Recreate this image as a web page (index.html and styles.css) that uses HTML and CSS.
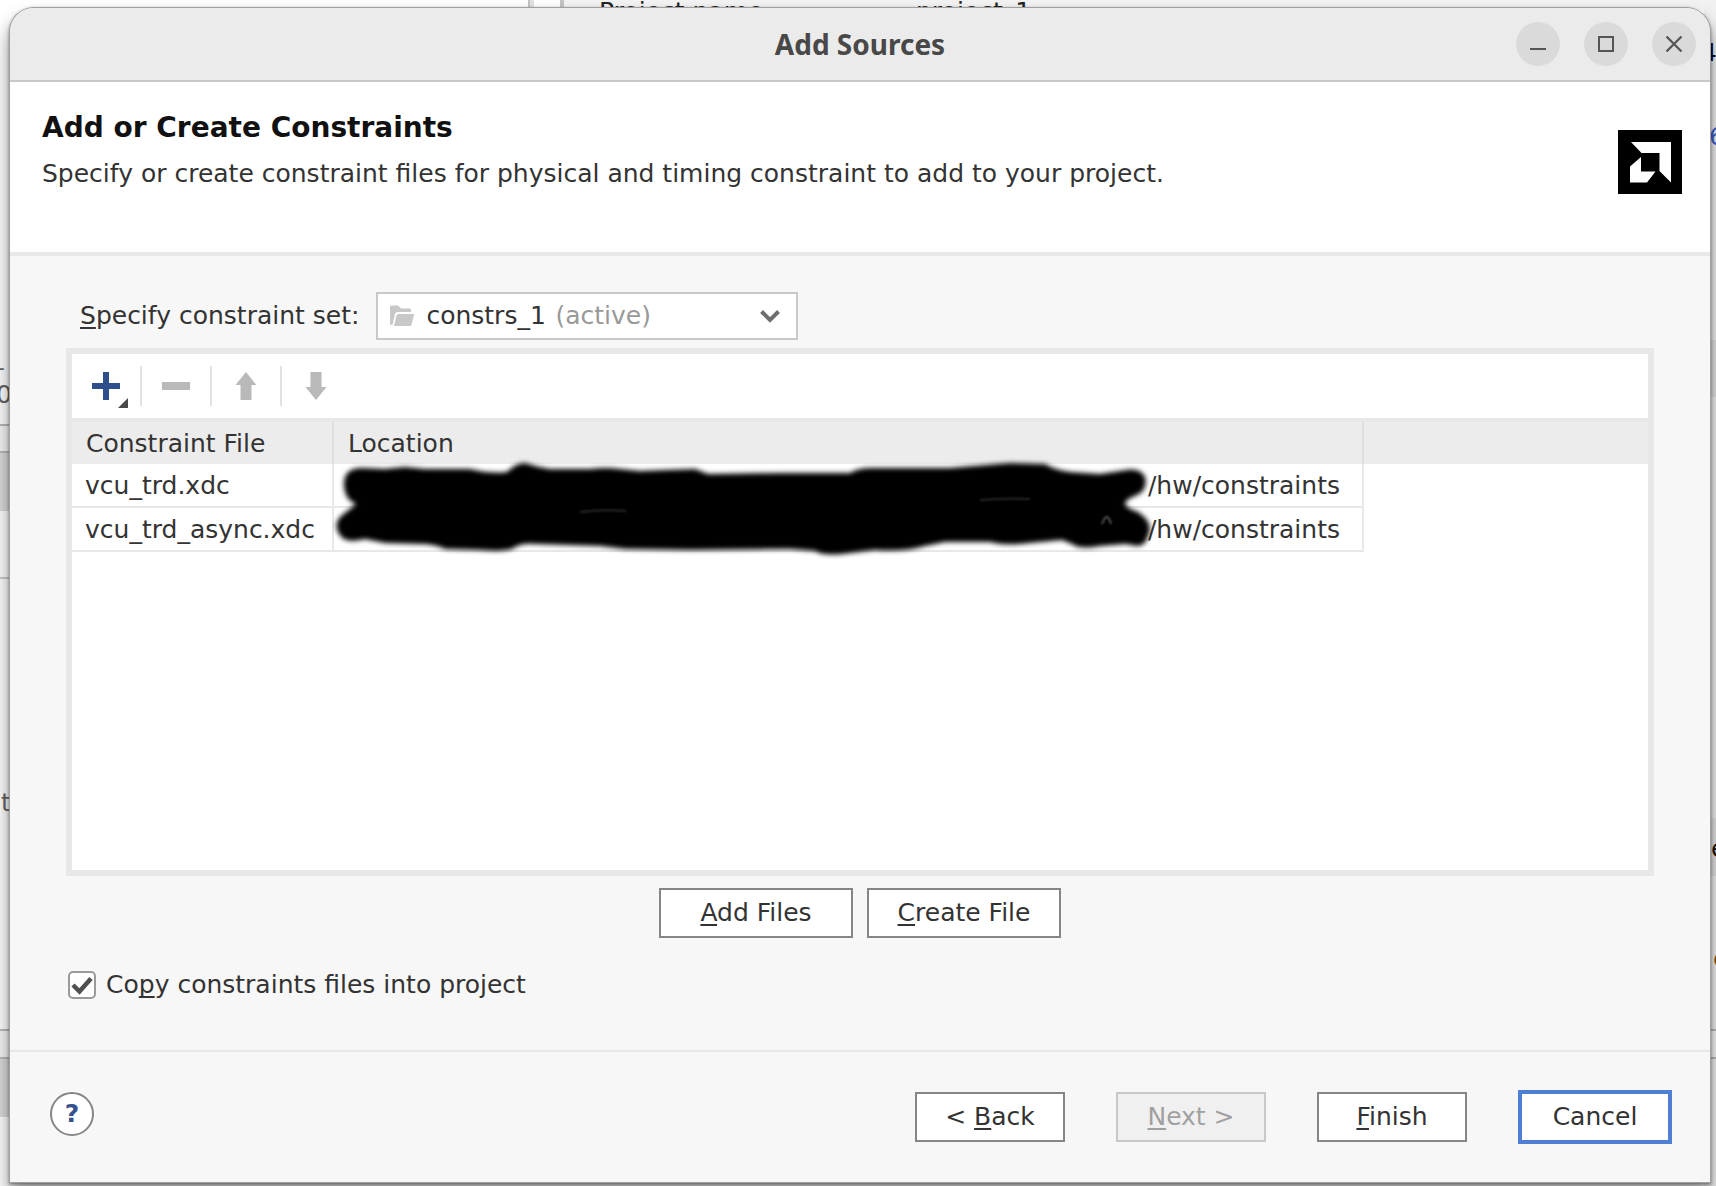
FILE: index.html
```html
<!DOCTYPE html>
<html lang="en">
<head>
<meta charset="utf-8">
<title>Add Sources</title>
<link rel="stylesheet" href="styles.css">
</head>
<body>
<div class="desktop" aria-hidden="true">
  <span class="pane-edge pane-edge-a"></span>
  <span class="pane-edge pane-edge-b"></span>
  <span class="peek peek-name">Project name:</span>
  <span class="peek peek-value">project_1</span>
  <div class="side side-left">
    <span class="band band-gap-1"></span>
    <span class="band band-head-1"></span>
    <span class="band band-rule"></span>
    <span class="band band-gap-2"></span>
    <span class="band band-head-2"></span>
    <span class="peek peek-rule">_</span>
    <span class="peek peek-zero">0</span>
    <span class="peek peek-t">t</span>
  </div>
  <div class="side side-right">
    <span class="band band-tint-1"></span>
    <span class="band band-tint-2"></span>
    <span class="band band-gap-2"></span>
    <span class="peek peek-four">4</span>
    <span class="peek peek-link">6</span>
    <span class="peek peek-e1">e</span>
    <span class="peek peek-e2">e</span>
  </div>
</div>

<main class="dialog" role="dialog" aria-labelledby="dialog-title">
  <header class="titlebar">
    <h1 class="title" id="dialog-title">Add Sources</h1>
    <div class="window-actions">
      <button class="window-button" type="button" aria-label="Minimize">
        <svg width="44" height="44" viewBox="0 0 44 44"><path d="M14 27h16" stroke="#555" stroke-width="2"/></svg>
      </button>
      <button class="window-button" type="button" aria-label="Maximize">
        <svg width="44" height="44" viewBox="0 0 44 44"><path d="M15 15h14v14H15z" fill="none" stroke="#555" stroke-width="2"/></svg>
      </button>
      <button class="window-button" type="button" aria-label="Close">
        <svg width="44" height="44" viewBox="0 0 44 44"><path d="M14.500 14.500l15 15m0-15l-15 15" stroke="#555" stroke-width="2.300"/></svg>
      </button>
    </div>
  </header>

  <section class="intro">
    <div class="intro-text">
      <h2 class="heading">Add or Create Constraints</h2>
      <p class="lead">Specify or create constraint files for physical and timing constraint to add to your project.</p>
    </div>
    <svg class="logo" width="64" height="64" viewBox="0 0 64 64" role="img" aria-label="AMD">
      <path d="M0 0h64v64H0z" fill="#000"/>
      <path d="M13 12H53v40.500L41.500 41V23H23.500z" fill="#fff"/>
      <path d="M23 27v14.500h14.500L29 52.500H12V36.500z" fill="#fff"/>
    </svg>
  </section>

  <form class="content">
    <div class="set-row">
      <label for="constraint-set"><u>S</u>pecify constraint set:</label>
      <div class="combo">
        <select class="combo-select" id="constraint-set"><option>constrs_1</option></select>
        <svg class="combo-folder" width="24" height="22" viewBox="0 0 24 22"><path d="M0 2q0-1.500 1.500-1.500H8L11 3.500h8.500q1.500 0 1.500 1.500v2H7.500Q5.500 7 5 9L2.500 20H1.500Q0 20 0 18.500z" fill="#c8c8c8"/><path d="M8.500 9H23.500q.6 0 .5 1L21.500 19.500q-.4 1.500-2 1.500H4L6.500 10.500Q7 9 8.500 9z" fill="#c8c8c8"/></svg>
        <span class="combo-state">(active)</span>
        <svg class="combo-arrow" width="20" height="14" viewBox="0 0 20 14"><path d="M1.500 2.500L10 11l8.500-8.500" fill="none" stroke="#6e6e6e" stroke-width="4"/></svg>
      </div>
    </div>

    <div class="panel">
      <div class="toolbar">
        <button class="tool" type="button" aria-label="Add">
          <svg width="40" height="40" viewBox="0 0 40 40"><path d="M6 20h28M20 6v28" stroke="#2f4f8a" stroke-width="6"/><path d="M42 32v10H32z" fill="#4a4a4a"/></svg>
        </button>
        <button class="tool" type="button" aria-label="Remove" disabled>
          <svg width="40" height="40" viewBox="0 0 40 40"><path d="M6 20h28" stroke="#b9b9b9" stroke-width="8"/></svg>
        </button>
        <button class="tool" type="button" aria-label="Move up" disabled>
          <svg width="40" height="40" viewBox="0 0 40 40"><path d="M20 6l10.500 13H25.500v15h-11V19H9.500z" fill="#b9b9b9"/></svg>
        </button>
        <button class="tool" type="button" aria-label="Move down" disabled>
          <svg width="40" height="40" viewBox="0 0 40 40"><path d="M19 34l10.500-13H24.500V6h-11v15H8.500z" fill="#b9b9b9"/></svg>
        </button>
      </div>
      <div class="table-area">
        <table class="files">
          <colgroup><col class="col-file"><col class="col-location"><col></colgroup>
          <thead><tr><th scope="col">Constraint File</th><th scope="col">Location</th><td></td></tr></thead>
          <tbody>
            <tr><td>vcu_trd.xdc</td><td class="path">/hw/constraints</td><td></td></tr>
            <tr><td>vcu_trd_async.xdc</td><td class="path">/hw/constraints</td><td></td></tr>
          </tbody>
        </table>
        <svg class="marker" width="850" height="120" viewBox="320 450 850 120" aria-hidden="true">
          <defs>
            <filter id="soft" x="-5%" y="-20%" width="110%" height="140%"><feGaussianBlur stdDeviation="2.500"/></filter>
            <filter id="faint" x="-20%" y="-200%" width="140%" height="500%"><feGaussianBlur stdDeviation="1"/></filter>
          </defs>
          <path filter="url(#soft)" d="M344 486Q343 468 362 468L385 469L405 467L425 469L470 469Q490 474 507 472Q516 463 525 463Q537 467 550 469L590 469Q606 467 620 469L640 471L665 470L695 469L708 474L780 473L850 473Q858 468 872 468L950 468Q985 465 1010 463L1045 464Q1055 470 1070 472L1100 474L1120 471Q1140 466 1145 477Q1148 490 1137 495Q1124 500 1125 504Q1126 508 1138 512Q1153 522 1149 533Q1146 546 1138 546L1125 544L1100 546Q1080 550 1072 544L1062 540L1030 543Q1005 546 990 542L945 542L925 546Q905 552 875 550L850 553Q825 557 815 551L790 549L690 550L625 549L600 546L535 544Q520 543 512 549Q500 552 480 550L445 549Q435 544 420 544L385 543L365 539Q345 544 340 535Q333 526 340 517Q350 509 356 504Q345 500 344 486z"/>
          <g filter="url(#faint)" fill="none" stroke="#2a2a2a" stroke-width="2">
            <path d="M580 512q22-3 46-1M980 500q25-2 50-1"/>
            <path d="M1102 524q5-14 9 0" stroke="#555"/>
          </g>
        </svg>
      </div>
    </div>

    <div class="file-actions">
      <button class="button button-wide" type="button"><u>A</u>dd Files</button>
      <button class="button button-wide" type="button"><u>C</u>reate File</button>
    </div>

    <div class="copy-row">
      <input class="check" type="checkbox" id="copy-files" checked>
      <label for="copy-files">Co<u>p</u>y constraints files into project</label>
    </div>
  </form>

  <footer class="footer">
    <button class="help" type="button" aria-label="Help">?</button>
    <div class="nav">
      <button class="button" type="button">&lt; <u>B</u>ack</button>
      <button class="button" type="button" disabled><u>N</u>ext &gt;</button>
      <button class="button" type="button"><u>F</u>inish</button>
      <button class="button button-focus" type="button">Cancel</button>
    </div>
  </footer>
</main>
</body>
</html>
```
FILE: styles.css
```css
* { box-sizing: border-box; }

body {
  margin: 0;
  min-height: 100vh;
  display: flex;
  position: relative;
  overflow: hidden;
  background: #fff;
  color: #333;
  font: 25px/32px "DejaVu Sans", sans-serif;
}

h1, h2, p { margin: 0; }

button, select { font: inherit; color: inherit; }

u {
  text-decoration: underline 2px;
  text-underline-offset: 3px;
  text-decoration-skip-ink: none;
}

/* Main window showing round the dialog's edges */
.desktop { position: absolute; inset: 0; overflow: hidden; }

.pane-edge { position: absolute; top: 0; height: 10px; background: #e2e2e2; border: solid #c4c4c4; }
.pane-edge-a { left: 528px; width: 6px; border-width: 0 0 0 2px; }
.pane-edge-b { left: 560px; right: 0; background: #f3f3f3; border-width: 0 0 0 4px; }

.peek { position: absolute; white-space: nowrap; }
.peek-name { left: 599px; top: -4px; color: #222; }
.peek-value { left: 916px; top: -4px; color: #222; }

.side { position: absolute; top: 0; bottom: 0; width: 12px; overflow: hidden; }
.side-left { left: 0; background: #fff; }
.side-right { right: 0; background: #f1f1f1; }

.band { position: absolute; left: 0; right: 0; }
.band-gap-1 { top: 424px; height: 29px; background: #f7f7f7; border: solid #bbb; border-width: 2px 0; }
.band-head-1 { top: 453px; height: 58px; background: #dcdcdc; }
.band-rule { top: 577px; height: 2px; background: #ccc; }
.band-gap-2 { top: 1029px; height: 30px; background: #f7f7f7; border: solid #bbb; border-width: 2px 0; }
.band-head-2 { top: 1059px; height: 58px; background: #dcdcdc; }
.band-tint-1 { top: 340px; height: 57px; background: #e4e4e4; }
.band-tint-2 { top: 818px; height: 58px; background: #e4e4e4; }

.peek-rule { left: -9px; top: 340px; color: #666; }
.peek-zero { left: -4px; top: 379px; color: #666; }
.peek-t { left: 1px; top: 787px; color: #666; }
.peek-four { left: -3px; top: 37px; color: #113; }
.peek-link { left: 5px; top: 121px; color: #3f62d0; }
.peek-e1 { left: 7px; top: 833px; color: #210; }
.peek-e2 { left: 9px; top: 943px; color: #842; }

/* Dialog frame */
.dialog {
  position: relative;
  flex: 1;
  display: flex;
  flex-direction: column;
  margin: 8px 6px 4px 10px;
  background: #f7f7f7;
  border-radius: 24px 24px 0 0;
  box-shadow: 0 0 0 1px #a0a0a0, 0 1px 3px 1px rgba(0, 0, 0, .4), 0 12px 18px 2px rgba(0, 0, 0, .4);
}

.titlebar {
  display: grid;
  grid-template-columns: 1fr auto 1fr;
  align-items: center;
  height: 74px;
  padding: 0 14px;
  background: #ebebeb;
  border-bottom: 2px solid #c8c8c8;
  border-radius: 24px 24px 0 0;
}

.title {
  grid-column: 2;
  font: bold 28px/36px "Noto Sans", sans-serif;
  color: #484848;
}

.window-actions { display: flex; justify-content: flex-end; gap: 24px; }

.window-button {
  width: 44px;
  height: 44px;
  padding: 0;
  border: 0;
  border-radius: 50%;
  background: #dadada;
}

.window-button svg, .tool svg, .logo { display: block; }

/* Page heading */
.intro {
  display: flex;
  justify-content: space-between;
  align-items: flex-start;
  min-height: 174px;
  padding: 28px 28px 28px 32px;
  background: #fff;
  border-bottom: 4px solid #e8e8e8;
}

.heading { font-size: 28px; line-height: 36px; font-weight: bold; color: #111; }
.lead { margin-top: 12px; }
.logo { margin-top: 20px; }

/* Form */
.content {
  flex: 1;
  display: flex;
  flex-direction: column;
  padding: 36px 56px 52px;
}

.set-row { display: flex; align-items: center; gap: 17px; padding-left: 14px; }

.combo { display: grid; align-items: center; width: 422px; }
.combo > * { grid-area: 1 / 1; }
.combo > :not(select) { pointer-events: none; }

.combo-select {
  appearance: none;
  width: 100%;
  height: 48px;
  padding: 0 40px 0 48px;
  border: 2px solid #c8c8c8;
  border-radius: 0;
  background: #fff;
}

.combo-folder { margin-left: 14px; }
.combo-state { margin-left: 179px; color: #999; }
.combo-arrow { justify-self: end; margin-right: 18px; }

.panel {
  flex: 1;
  display: flex;
  flex-direction: column;
  min-height: 360px;
  margin-top: 8px;
  border: 6px solid #e8e8e8;
  background: #fff;
}

.toolbar {
  display: flex;
  align-items: center;
  height: 68px;
  border-bottom: 4px solid #e8e8e8;
}

.tool {
  display: flex;
  align-items: center;
  justify-content: center;
  width: 70px;
  height: 40px;
  padding: 0;
  border: 0;
  border-right: 2px solid #e2e2e2;
  background: none;
}

.tool:last-child { border-right: 0; }
.tool svg { overflow: visible; }

.table-area { position: relative; }

.files {
  width: 100%;
  table-layout: fixed;
  border-collapse: separate;
  border-spacing: 0;
}

.col-file { width: 262px; }
.col-location { width: 1030px; }

.files th, .files td { padding: 2px 0 0; text-align: left; font-weight: normal; }
.files thead th, .files thead td { height: 42px; background: #ececec; }
.files thead th { padding-left: 14px; border-right: 2px solid #e0e0e0; }
.files tbody td { height: 44px; padding-left: 13px; border: solid #e8e8e8; border-width: 0 2px 2px 0; }
.files tbody td:last-child { border: 0; }
.files tbody .path { padding-right: 22px; text-align: right; }

/* Pen strokes over the private part of the paths */
.marker { position: absolute; left: 248px; top: 28px; pointer-events: none; }

/* Buttons */
.button {
  width: 150px;
  height: 50px;
  padding: 0;
  border: 2px solid #868686;
  background: #fff;
}

.button:disabled { border-color: #c8c8c8; background: #f0f0f0; color: #a0a0a0; }
.button-wide { width: 194px; }
.button-focus { width: 154px; height: 54px; border: 4px solid #4f7fd3; }

.file-actions { display: flex; justify-content: center; gap: 14px; margin-top: 12px; }

.copy-row { display: flex; align-items: center; gap: 10px; height: 30px; margin-top: 32px; margin-bottom: -2px; padding-left: 2px; }

.check {
  appearance: none;
  width: 28px;
  height: 28px;
  margin: 0;
  border: 2px solid #9a9a9a;
  border-radius: 5px;
  background: #fff url("data:image/svg+xml,%3Csvg xmlns='http://www.w3.org/2000/svg' viewBox='0 0 24 24'%3E%3Cpath d='M3 12l6.500 6.500L21 5.500' fill='none' stroke='%23505050' stroke-width='4.500'/%3E%3C/svg%3E") center / 24px 24px no-repeat;
}

/* Wizard navigation */
.footer {
  display: flex;
  align-items: flex-start;
  justify-content: space-between;
  min-height: 132px;
  padding: 38px 38px 38px 40px;
  border-top: 2px solid #e8e8e8;
}

.help {
  width: 44px;
  height: 44px;
  margin-top: 2px;
  padding: 0;
  border: 2px solid #868686;
  border-radius: 50%;
  background: #fff;
  color: #34528c;
  font-weight: bold;
}

.nav { display: flex; align-items: center; gap: 51px; }
```
